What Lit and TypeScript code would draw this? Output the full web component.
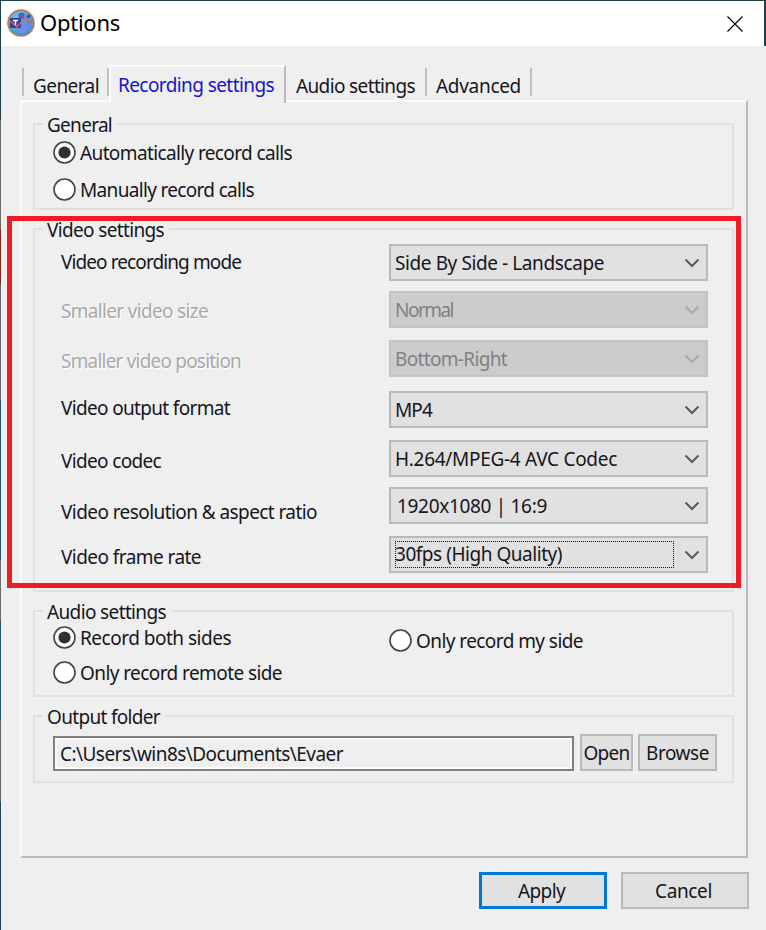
import { LitElement, html, css, svg, nothing } from "lit";
import { customElement } from "lit/decorators.js";
import { styleMap } from "lit/directives/style-map.js";

const UI_FONT = '"Noto Sans", "Open Sans", sans-serif';
const pen = document.createElement("canvas").getContext("2d")!;

/** One line of text, tracked so that its advance width equals `width`. */
function line(text: string, width: number, cls = "", size = 19, dy = 0) {
  pen.font = `${size}px ${UI_FONT}`;
  const spacing = (width - pen.measureText(text).width) / text.length;
  const style: Record<string, string> = {
    letterSpacing: `${spacing.toFixed(3)}px`,
    width: `${width}px`,
  };
  if (dy) style.marginTop = `${dy}px`;
  return html`<span class="line ${cls}" style=${styleMap(style)}>${text}</span>`;
}

interface Row {
  label: string;
  labelW: number;
  labelDy: number;
  value: string;
  valueW: number;
  valueDy: number;
  gap: number;
  disabled?: boolean;
  focused?: boolean;
  indent?: number;
}

const ROWS: Row[] = [
  { label: "Video recording mode", labelW: 180, labelDy: 6, value: "Side By Side - Landscape", valueW: 209, valueDy: 5, gap: 14 },
  { label: "Smaller video size", labelW: 147, labelDy: 8, value: "Normal", valueW: 58, valueDy: 5, gap: 10, disabled: true },
  { label: "Smaller video position", labelW: 180, labelDy: 9, value: "Bottom-Right", valueW: 112, valueDy: 5, gap: 12, disabled: true },
  { label: "Video output format", labelW: 169, labelDy: 5, value: "MP4", valueW: 37, valueDy: 5, gap: 14 },
  { label: "Video codec", labelW: 100, labelDy: 9, value: "H.264/MPEG-4 AVC Codec", valueW: 222, valueDy: 5, gap: 12 },
  { label: "Video resolution & aspect ratio", labelW: 256, labelDy: 13, value: "1920x1080 | 16:9", valueW: 150, valueDy: 5, gap: 10, indent: 2 },
  { label: "Video frame rate", labelW: 140, labelDy: 9, value: "30fps (High Quality)", valueW: 167, valueDy: 6, gap: 12, focused: true },
];

@customElement("app-root")
export class AppRoot extends LitElement {
  static styles = css`
    :host {
      display: block;
      width: 766px;
      height: 930px;
      overflow: hidden;
      font-family: "Noto Sans", "Open Sans", sans-serif;
      font-size: 19px;
      color: #15151c;
      background: #efefef;
    }
    * { box-sizing: border-box; }
    .window {
      position: relative;
      display: flex;
      flex-direction: column;
      height: 930px;
    }
    .edge {
      position: absolute;
      left: 0; top: 0;
      width: 1px; height: 930px;
      background: linear-gradient(#1f3f48 0 120px, #6b6b6b 120px 230px, #7a2420 230px 284px, #666 284px 400px, #2c5568 400px 560px, #6b6b6b 560px 620px, #215268 620px 720px, #6b6565 720px 802px, #1f4450 802px);
    }
    .line {
      display: block;
      flex: none;
      line-height: 24px;
      height: 24px;
      white-space: pre;
    }
    .titlebar {
      display: flex;
      align-items: center;
      flex: none;
      height: 46px;
      background: #fff;
      border-top: 1px solid #1f4248;
      border-right: 2px solid #1f4248;
      padding: 0 20px 0 7px;
    }
    .logo { width: 28px; height: 28px; margin: 0 5px 2px 0; }
    .title { color: #000; font-size: 22px; margin-top: -4px; }
    .close { width: 16px; height: 16px; margin: 0 1px 0 auto; }
    .tabs {
      display: flex;
      align-items: flex-end;
      flex: none;
      height: 36px;
      margin: 19px 0 0 22px;
    }
    .tab {
      height: 28px;
      margin-bottom: 5px;
      border-right: 2px solid #c1c1c1;
      padding: 6px 0 0 10px;
    }
    .tab.first { width: 87px; border-left: 2px solid #c1c1c1; padding-left: 9px; }
    .tab.active {
      width: 177px;
      height: 38px;
      margin-bottom: -2px;
      border-left: 2px solid #fdfdfd;
      border-top: 2px solid #fdfdfd;
      border-right-color: #bababa;
      background: #efefef;
      color: #1515c8;
      padding: 6px 0 0 7px;
      z-index: 1;
    }
    .tab.audio { width: 141px; }
    .tab.adv { width: 105px; padding-left: 9px; }
    .panel {
      flex: none;
      width: 728px;
      height: 758px;
      margin-left: 20px;
      margin-top: -1px;
      border: 2px solid #b9b9b9;
      border-top-color: #fbfbfb;
      border-left-color: #fbfbfb;
      padding: 21px 12px 0 11px;
    }
    .group {
      position: relative;
      border: 2px solid #e0e0e0;
      width: 701px;
    }
    .legend {
      position: absolute;
      left: 8px;
      top: -12px;
      padding: 0 5px 0 4px;
      background: #efefef;
    }
    .general { height: 87px; padding: 15px 0 0 18px; }
    .video { height: 364px; margin-top: 18px; }
    .sound { height: 87px; margin-top: 18px; padding: 13px 0 0 18px; }
    .output {
      display: flex;
      height: 68px;
      margin-top: 18px;
      padding: 17px 0 0 18px;
    }
    .radio { display: flex; align-items: center; gap: 4px; height: 24px; }
    .radio svg { width: 23px; height: 23px; }
    .radio .line { margin-top: 1px; }
    .general .radio + .radio { margin-top: 13px; }
    .pair { display: flex; }
    .pair .radio:first-child { width: 336px; }
    .pair .lower { margin-top: 3px; }
    .lower .radio:first-child { width: auto; }
    .sound > .radio { margin-top: 8px; }
    .row {
      display: grid;
      grid-template-columns: 328px 318px;
      padding-left: 26px;
      height: 37px;
      box-sizing: content-box;
    }
    .row.off .caption { color: #a9a9a9; text-shadow: 1px 1px 0 #fff; }
    .select {
      display: flex;
      width: 319px;
      height: 37px;
      border: 2px solid #b9b9b9;
      background: #e1e1e1;
      padding: 0 6px 0 4px;
    }
    .off .select { background: #ccc; border-color: #c3c3c3; color: #808084; }
    .select svg { width: 16px; height: 10px; margin: 12px 0 0 auto; }
    .focus {
      width: 279px;
      height: 27px;
      margin: 3px 0 0 0;
      border: 1px dotted #111;
    }
    .focus .line { margin-left: -1px; }
    .frame {
      position: absolute;
      left: 7px; top: 216px;
      width: 734px; height: 372px;
      border: 5px solid #ed1c24;
    }
    .path {
      width: 521px;
      height: 35px;
      margin-top: 2px;
      border: 2px solid #808080;
      box-shadow: inset 0 0 0 2px #fafafa;
      padding: 4px 0 0 5px;
    }
    .btn {
      display: flex;
      justify-content: center;
      align-items: center;
      height: 37px;
      background: #e1e1e1;
      border: 2px solid #b9b9b9;
    }
    .open { width: 53px; margin-left: 6px; }
    .browse { width: 79px; margin-left: 5px; }
    .actions { display: flex; gap: 14px; margin: 14px 0 0 479px; }
    .actions .btn { width: 128px; padding-right: 3px; }
    .actions .apply { border: 3px solid #0078d7; }
  `;

  private radio(text: string, width: number, on = false) {
    return html`<div class="radio">
      <svg viewBox="0 0 23 23">
        <circle cx="11.5" cy="11.5" r="10.5" fill="#fff" stroke="#444" stroke-width="1.6"></circle>
        ${on ? svg`<circle cx="11.5" cy="11.5" r="6.1" fill="#303030"></circle>` : nothing}
      </svg>
      ${line(text, width)}
    </div>`;
  }

  private row(r: Row) {
    const value = line(r.value, r.valueW, "", 19, r.focused ? 0 : r.valueDy);
    return html`<div class="row ${r.disabled ? "off" : ""}" style=${styleMap({ paddingTop: `${r.gap}px` })}>
      ${line(r.label, r.labelW, "caption", 19, r.labelDy)}
      <div class="select" style=${styleMap(r.indent ? { paddingLeft: `${4 + r.indent}px` } : {})}>
        ${r.focused ? html`<div class="focus">${value}</div>` : value}
        <svg viewBox="0 0 16 10"><path d="M1.500 1.500L8 8L14.500 1.500" fill="none" stroke=${r.disabled ? "#aaa" : "#5a5a5a"} stroke-width="2"></path></svg>
      </div>
    </div>`;
  }

  render() {
    return html`<div class="window">
      <div class="titlebar">
        <svg class="logo" viewBox="0 0 28 28">
          <defs><radialGradient id="g" cx=".4" cy=".3" r=".75"><stop offset="0" stop-color="#76c3e8"></stop><stop offset="1" stop-color="#3b8fc0"></stop></radialGradient></defs>
          <circle cx="14" cy="14" r="13" fill="url(#g)" stroke="#bd7860" stroke-width="1.6"></circle>
          <circle cx="14.500" cy="7" r="3.200" fill="#4a63c4"></circle>
          <circle cx="21.500" cy="7.500" r="2.100" fill="#3757a8"></circle>
          <path d="M9 11H20V19C20 26 9 26 9 19Z" fill="#6b8cf0"></path>
          <path d="M20 11H25V17C25 20 22 21 20 20Z" fill="#5c8fd8"></path>
          <rect x="3" y="9" width="11" height="10" rx="1" fill="#2f3f9c"></rect>
          <path d="M6 11.500H11M8.500 11.500V17" stroke="#fff" stroke-width="1.500"></path>
          <path d="M3 12L10 18L18 9L26 16" fill="none" stroke="#d9694b" stroke-width="1.300"></path>
        </svg>
        <span class="title">${line("Options", 80, "", 22)}</span>
        <svg class="close" viewBox="0 0 16 16"><path d="M.5 .5L15.500 15.500M15.500 .5L.5 15.500" stroke="#000" stroke-width="1.200"></path></svg>
      </div>
      <div class="tabs">
        <div class="tab first">${line("General", 66)}</div>
        <div class="tab active">${line("Recording settings", 156)}</div>
        <div class="tab audio">${line("Audio settings", 119)}</div>
        <div class="tab adv">${line("Advanced", 85)}</div>
      </div>
      <div class="panel">
        <div class="group general">
          <div class="legend">${line("General", 65)}</div>
          ${this.radio("Automatically record calls", 212, true)}
          ${this.radio("Manually record calls", 174)}
        </div>
        <div class="group video">
          <div class="legend">${line("Video settings", 117)}</div>
          ${ROWS.map((r) => this.row(r))}
        </div>
        <div class="group sound">
          <div class="legend">${line("Audio settings", 119)}</div>
          <div class="pair">
            ${this.radio("Record both sides", 151, true)}
            <div class="lower">${this.radio("Only record my side", 167)}</div>
          </div>
          ${this.radio("Only record remote side", 202)}
        </div>
        <div class="group output">
          <div class="legend">${line("Output folder", 113)}</div>
          <div class="path">${line("C:\\Users\\win8s\\Documents\\Evaer", 283)}</div>
          <div class="btn open">${line("Open", 46)}</div>
          <div class="btn browse">${line("Browse", 63)}</div>
        </div>
      </div>
      <div class="actions">
        <div class="btn apply">${line("Apply", 47)}</div>
        <div class="btn">${line("Cancel", 57)}</div>
      </div>
      <div class="edge"></div>
      <div class="frame"></div>
    </div>`;
  }
}
